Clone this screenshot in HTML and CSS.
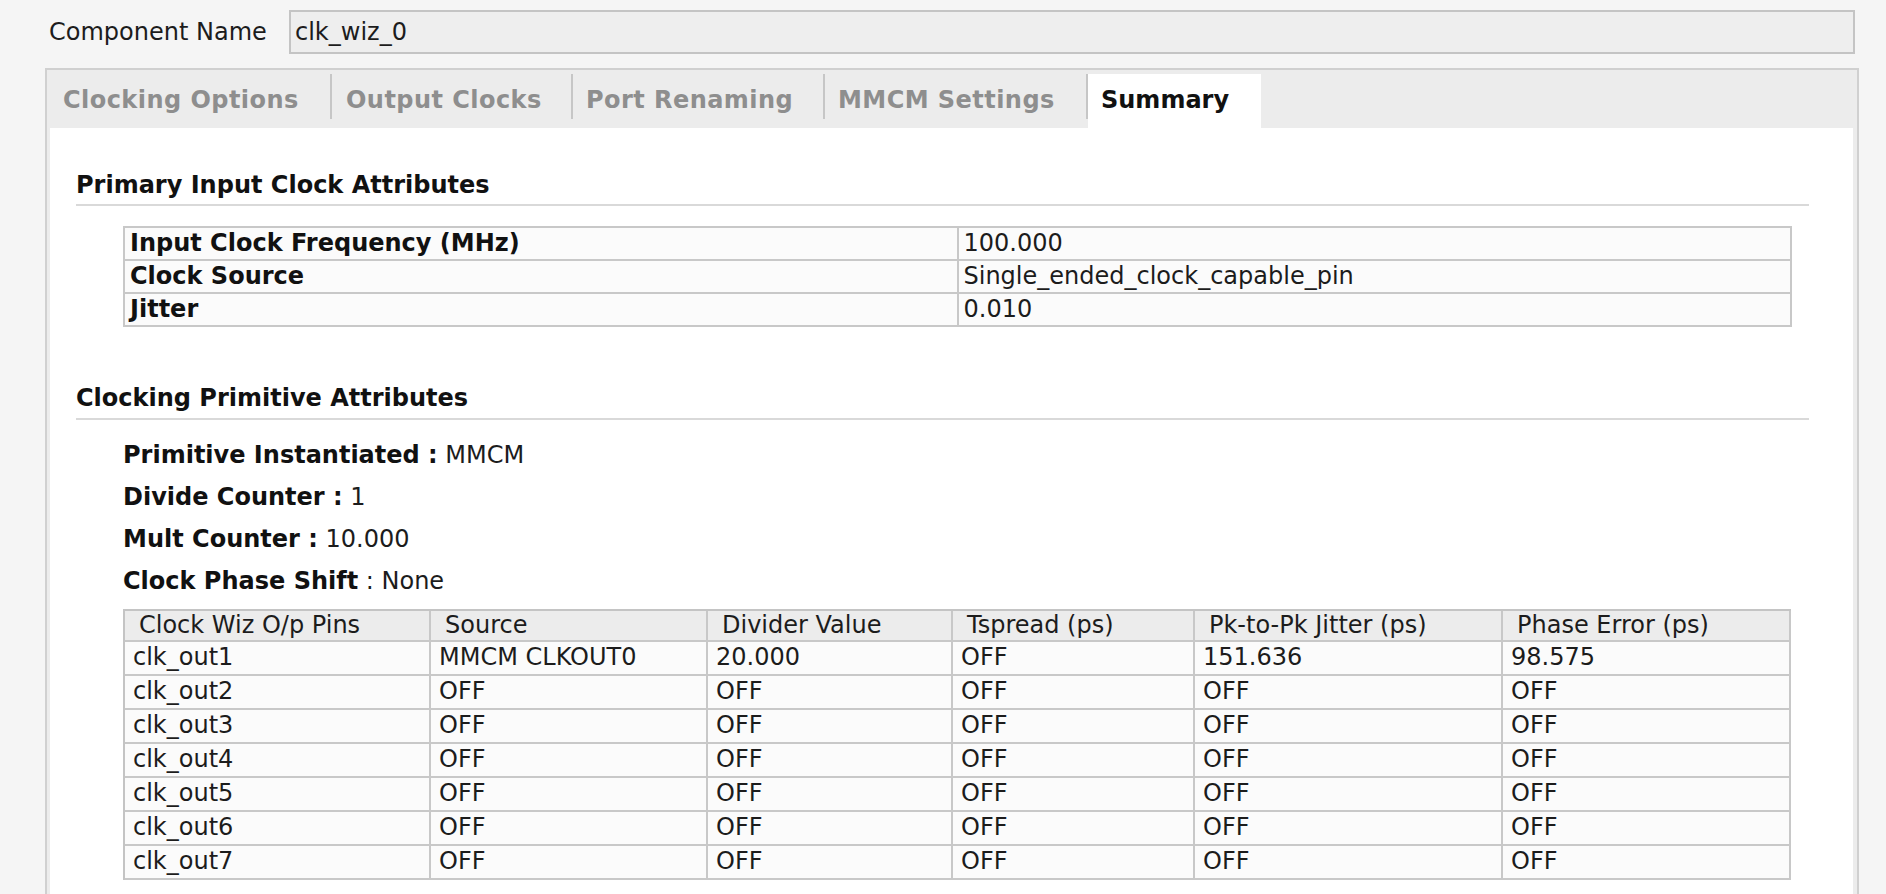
FILE: index.html
```html
<!DOCTYPE html>
<html lang="en">
<head>
<meta charset="utf-8">
<title>Clocking Wizard - Summary</title>
<link rel="stylesheet" href="styles.css">
</head>
<body>
<div class="name-row">
  <span class="name-label">Component Name</span>
  <div class="name-field">clk_wiz_0</div>
</div>
<div class="panel">
  <div class="tabs">
    <div class="tab tab-clocking">Clocking Options</div>
    <span class="tab-sep"></span>
    <div class="tab tab-outputs">Output Clocks</div>
    <span class="tab-sep"></span>
    <div class="tab tab-ports">Port Renaming</div>
    <span class="tab-sep"></span>
    <div class="tab tab-mmcm">MMCM Settings</div>
    <span class="tab-sep"></span>
    <div class="tab tab-summary tab-active">Summary</div>
  </div>
  <div class="content">
    <h2 class="section-title">Primary Input Clock Attributes</h2>
    <table class="kv-table">
      <tr><td class="kv-key">Input Clock Frequency (MHz)</td><td>100.000</td></tr>
      <tr><td class="kv-key">Clock Source</td><td>Single_ended_clock_capable_pin</td></tr>
      <tr><td class="kv-key">Jitter</td><td>0.010</td></tr>
    </table>

    <h2 class="section-title section-title-2">Clocking Primitive Attributes</h2>
    <div class="prim-list">
      <div class="prim-line"><b>Primitive Instantiated :</b> MMCM</div>
      <div class="prim-line"><b>Divide Counter :</b> 1</div>
      <div class="prim-line"><b>Mult Counter :</b> 10.000</div>
      <div class="prim-line"><b>Clock Phase Shift</b> : None</div>
    </div>

    <table class="clk-table">
      <colgroup>
        <col class="c1"><col class="c2"><col class="c3"><col class="c4"><col class="c5"><col class="c6">
      </colgroup>
      <thead>
        <tr><th>Clock Wiz O/p Pins</th><th>Source</th><th>Divider Value</th><th>Tspread (ps)</th><th>Pk-to-Pk Jitter (ps)</th><th>Phase Error (ps)</th></tr>
      </thead>
      <tbody>
        <tr><td>clk_out1</td><td>MMCM CLKOUT0</td><td>20.000</td><td>OFF</td><td>151.636</td><td>98.575</td></tr>
        <tr><td>clk_out2</td><td>OFF</td><td>OFF</td><td>OFF</td><td>OFF</td><td>OFF</td></tr>
        <tr><td>clk_out3</td><td>OFF</td><td>OFF</td><td>OFF</td><td>OFF</td><td>OFF</td></tr>
        <tr><td>clk_out4</td><td>OFF</td><td>OFF</td><td>OFF</td><td>OFF</td><td>OFF</td></tr>
        <tr><td>clk_out5</td><td>OFF</td><td>OFF</td><td>OFF</td><td>OFF</td><td>OFF</td></tr>
        <tr><td>clk_out6</td><td>OFF</td><td>OFF</td><td>OFF</td><td>OFF</td><td>OFF</td></tr>
        <tr><td>clk_out7</td><td>OFF</td><td>OFF</td><td>OFF</td><td>OFF</td><td>OFF</td></tr>
      </tbody>
    </table>
  </div>
</div>
</body>
</html>
```

FILE: styles.css
```css
html, body {
  margin: 0;
  padding: 0;
}
body {
  background: #f5f5f5;
  font-family: "DejaVu Sans", "Liberation Sans", sans-serif;
  font-size: 24px;
  color: #1c1c1c;
  height: 894px;
  overflow: hidden;
  display: flex;
  flex-direction: column;
}

/* Component name row */
.name-row {
  flex: none;
  display: flex;
  align-items: center;
  padding: 10px 31px 0 49px;
}
.name-label {
  flex: 0 0 240px;
}
.name-field {
  flex: 1;
  height: 40px;
  line-height: 41px;
  border: 2px solid #c4c4c4;
  background: #eeeeee;
  padding-left: 4px;
}

/* Tab panel */
.panel {
  flex: 1;
  min-height: 0;
  overflow: hidden;
  display: flex;
  flex-direction: column;
  margin: 14px 27px 0 45px;
  border: 2px solid #d0d0d0;
  border-bottom: none;
  background: #ececec;
  padding: 0 4px 0 3px;
}
.tabs {
  flex: none;
  display: flex;
  align-items: flex-start;
  padding-top: 4px;
  height: 54px;
}
.tab {
  box-sizing: border-box;
  flex: none;
  height: 54px;
  line-height: 53px;
  padding: 0 0 0 13px;
  font-weight: bold;
  color: #8e8e8e;
  letter-spacing: 0.45px;
  white-space: nowrap;
}
.tab-clocking { width: 280px; }
.tab-outputs { width: 239px; padding-left: 14px; }
.tab-ports { width: 250px; }
.tab-mmcm { width: 261px; }
.tab-summary { width: 173px; }
.tab-sep {
  flex: none;
  width: 2px;
  height: 45px;
  background: #c6c6c6;
}
.tab-active {
  background: #ffffff;
  color: #111111;
  letter-spacing: 0;
}

.content {
  flex: 1;
  min-height: 0;
  overflow: hidden;
  background: #ffffff;
  padding: 42px 44px 0 26px;
}

.section-title {
  margin: 0;
  font-size: 24px;
  font-weight: bold;
  line-height: 30px;
  padding-bottom: 4px;
  border-bottom: 2px solid #d9d9d9;
  color: #111;
}
.section-title-2 {
  margin-top: 56px;
  padding-bottom: 5px;
}

/* key/value table */
.kv-table {
  margin: 20px 0 0 47px;
  width: 1669px;
  border-collapse: separate;
  border-spacing: 0;
  border-top: 2px solid #c8c8c8;
  border-left: 2px solid #c8c8c8;
  table-layout: fixed;
}
.kv-table td {
  width: 50%;
  height: 31px;
  line-height: 31px;
  padding: 0 5px;
  border-right: 2px solid #c8c8c8;
  border-bottom: 2px solid #c8c8c8;
  background: #fbfbfb;
  white-space: nowrap;
}
.kv-table .kv-key {
  font-weight: bold;
  color: #111;
}

/* primitive attributes */
.prim-list {
  margin-top: 14px;
  padding-left: 47px;
}
.prim-line {
  line-height: 42px;
}
.prim-line b {
  color: #111;
}

/* output clocks table */
.clk-table {
  margin: 7px 0 0 47px;
  width: 1668px;
  border-collapse: separate;
  border-spacing: 0;
  border-top: 2px solid #c4c4c4;
  border-left: 2px solid #c4c4c4;
  table-layout: fixed;
}
.clk-table .c1 { width: 306px; }
.clk-table .c2 { width: 277px; }
.clk-table .c3 { width: 245px; }
.clk-table .c4 { width: 242px; }
.clk-table .c5 { width: 308px; }
.clk-table .c6 { width: 288px; }
.clk-table th,
.clk-table td {
  border-right: 2px solid #c8c8c8;
  border-bottom: 2px solid #c8c8c8;
  text-align: left;
  white-space: nowrap;
  overflow: hidden;
}
.clk-table th {
  font-weight: normal;
  background: #ececec;
  height: 29px;
  line-height: 29px;
  padding: 0 0 0 14px;
}
.clk-table td {
  background: #fbfbfb;
  height: 32px;
  line-height: 31px;
  vertical-align: top;
  padding: 0 0 0 8px;
}
```
